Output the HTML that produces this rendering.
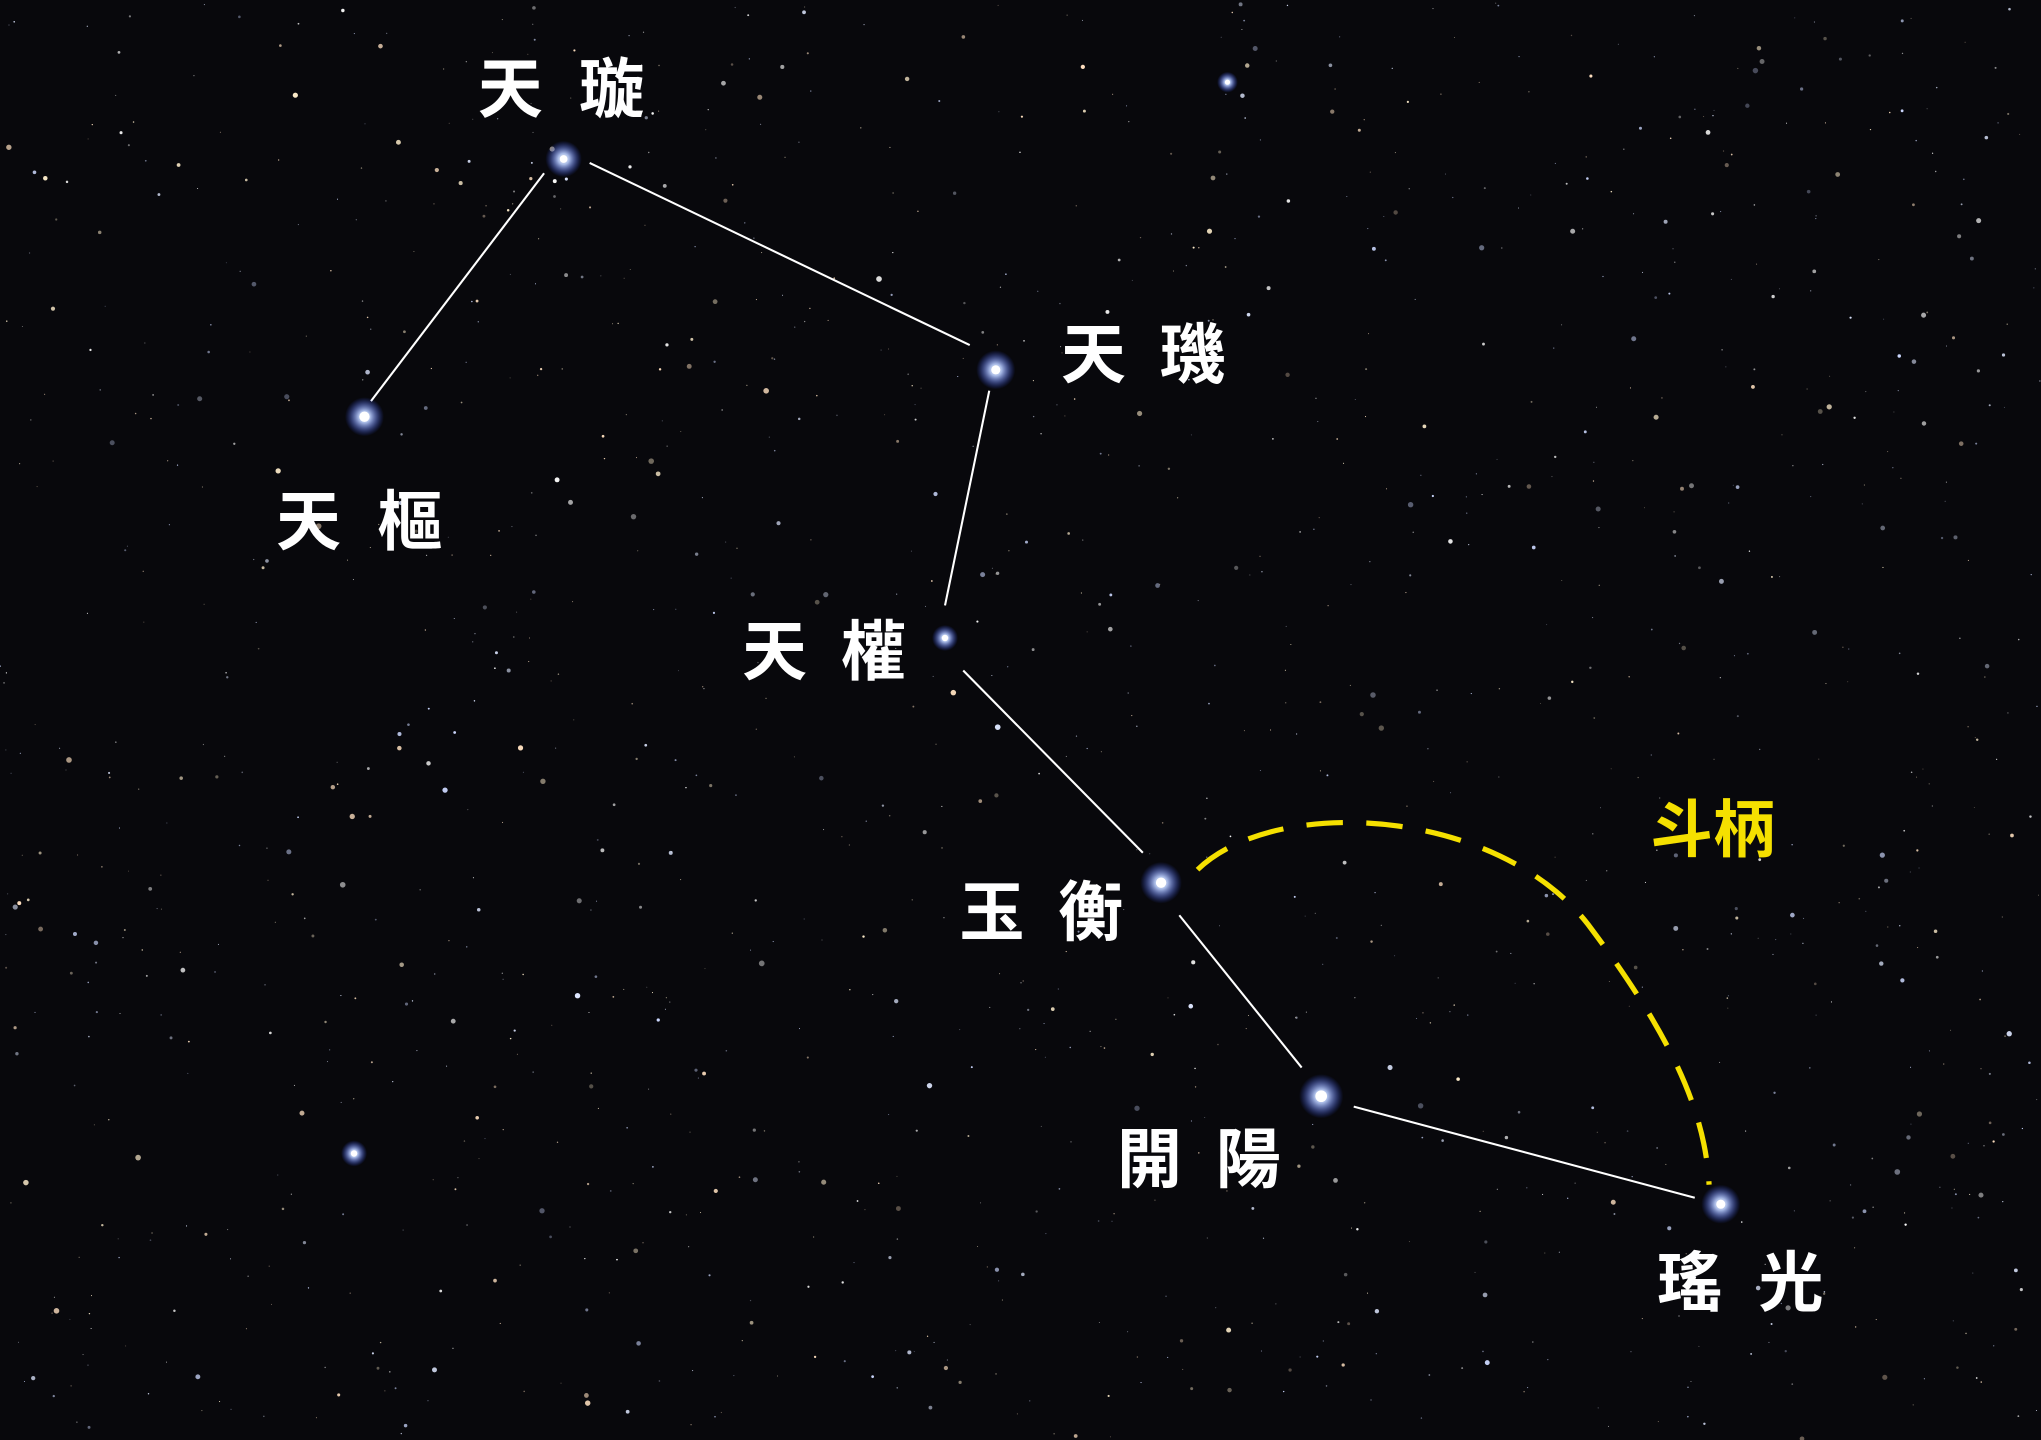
<!DOCTYPE html>
<html><head><meta charset="utf-8">
<style>
html,body{margin:0;padding:0;background:#07070b;width:2041px;height:1440px;overflow:hidden}
svg{display:block}
.l{font-family:"Liberation Sans","Noto Sans CJK TC",sans-serif;font-weight:bold;font-size:50px;fill:#fff}
</style></head><body>
<svg id="s" width="2041" height="1440" viewBox="0 0 1568 1106" xmlns="http://www.w3.org/2000/svg">
<defs>
<radialGradient id="g"><stop offset="0" stop-color="#fff"/><stop offset="0.3" stop-color="#bcd0ff" stop-opacity="0.9"/><stop offset="1" stop-color="#3050ff" stop-opacity="0"/></radialGradient>
</defs>
<rect width="1568" height="1106" fill="#08080c"/>
<g id="stars"></g>
<g stroke="#fff" stroke-width="1.6">
<line x1="418" y1="133" x2="285" y2="308"/>
<line x1="453" y1="125" x2="745" y2="265"/>
<line x1="760" y1="300" x2="726" y2="465"/>
<line x1="740" y1="515" x2="878" y2="655"/>
<line x1="906" y1="703" x2="1000" y2="820"/>
<line x1="1040" y1="850" x2="1302" y2="920"/>
</g>
<path d="M920,668 C980,610 1150,620 1220,710 C1280,790 1310,850 1313,910" fill="none" stroke="#f5e000" stroke-width="4" stroke-dasharray="28 18"/>
<g fill="url(#g)">
<circle cx="433" cy="122" r="14"/><circle cx="280" cy="320" r="15"/><circle cx="765" cy="284" r="15"/>
<circle cx="726" cy="490" r="10"/><circle cx="892" cy="678" r="16"/><circle cx="1015" cy="842" r="17"/>
<circle cx="1322" cy="925" r="15"/><circle cx="272" cy="886" r="10"/><circle cx="943" cy="63" r="8"/>
</g>
<g fill="#fff">
<circle cx="433" cy="122" r="3"/><circle cx="280" cy="320" r="4"/><circle cx="765" cy="284" r="3.5"/>
<circle cx="726" cy="490" r="2.5"/><circle cx="892" cy="678" r="4"/><circle cx="1015" cy="842" r="4.5"/>
<circle cx="1322" cy="925" r="3.5"/><circle cx="272" cy="886" r="2.5"/><circle cx="943" cy="63" r="2"/>
</g>
<text class="l" x="367" y="86" letter-spacing="28">天璇</text>
<text class="l" x="212" y="418" letter-spacing="28">天樞</text>
<text class="l" x="815" y="290" letter-spacing="26">天璣</text>
<text class="l" x="570" y="518" letter-spacing="26">天權</text>
<text class="l" x="737" y="718" letter-spacing="26">玉衡</text>
<text class="l" x="858" y="908" letter-spacing="26">開陽</text>
<text class="l" x="1273" y="1003" letter-spacing="28">瑤光</text>
<text class="l" x="1268" y="654" style="fill:#f5e000;font-size:48px">斗柄</text>
</svg>
<script>
var s=12345;function r(){s=(s*1103515245+12345)%2147483648;return s/2147483648;}
var g=document.getElementById('stars'),h='';
var cols=['#ffffff','#dde6ff','#ffeecc','#ccd8ff','#ffe0c0'];
for(var i=0;i<1400;i++){var x=r()*1568,y=r()*1106,rad=0.4+Math.pow(r(),4)*1.8,c=cols[Math.floor(r()*5)],o=0.3+r()*0.7;
h+='<circle cx="'+x.toFixed(1)+'" cy="'+y.toFixed(1)+'" r="'+rad.toFixed(2)+'" fill="'+c+'" opacity="'+o.toFixed(2)+'"/>';}
g.innerHTML=h;
</script>
</body></html>
